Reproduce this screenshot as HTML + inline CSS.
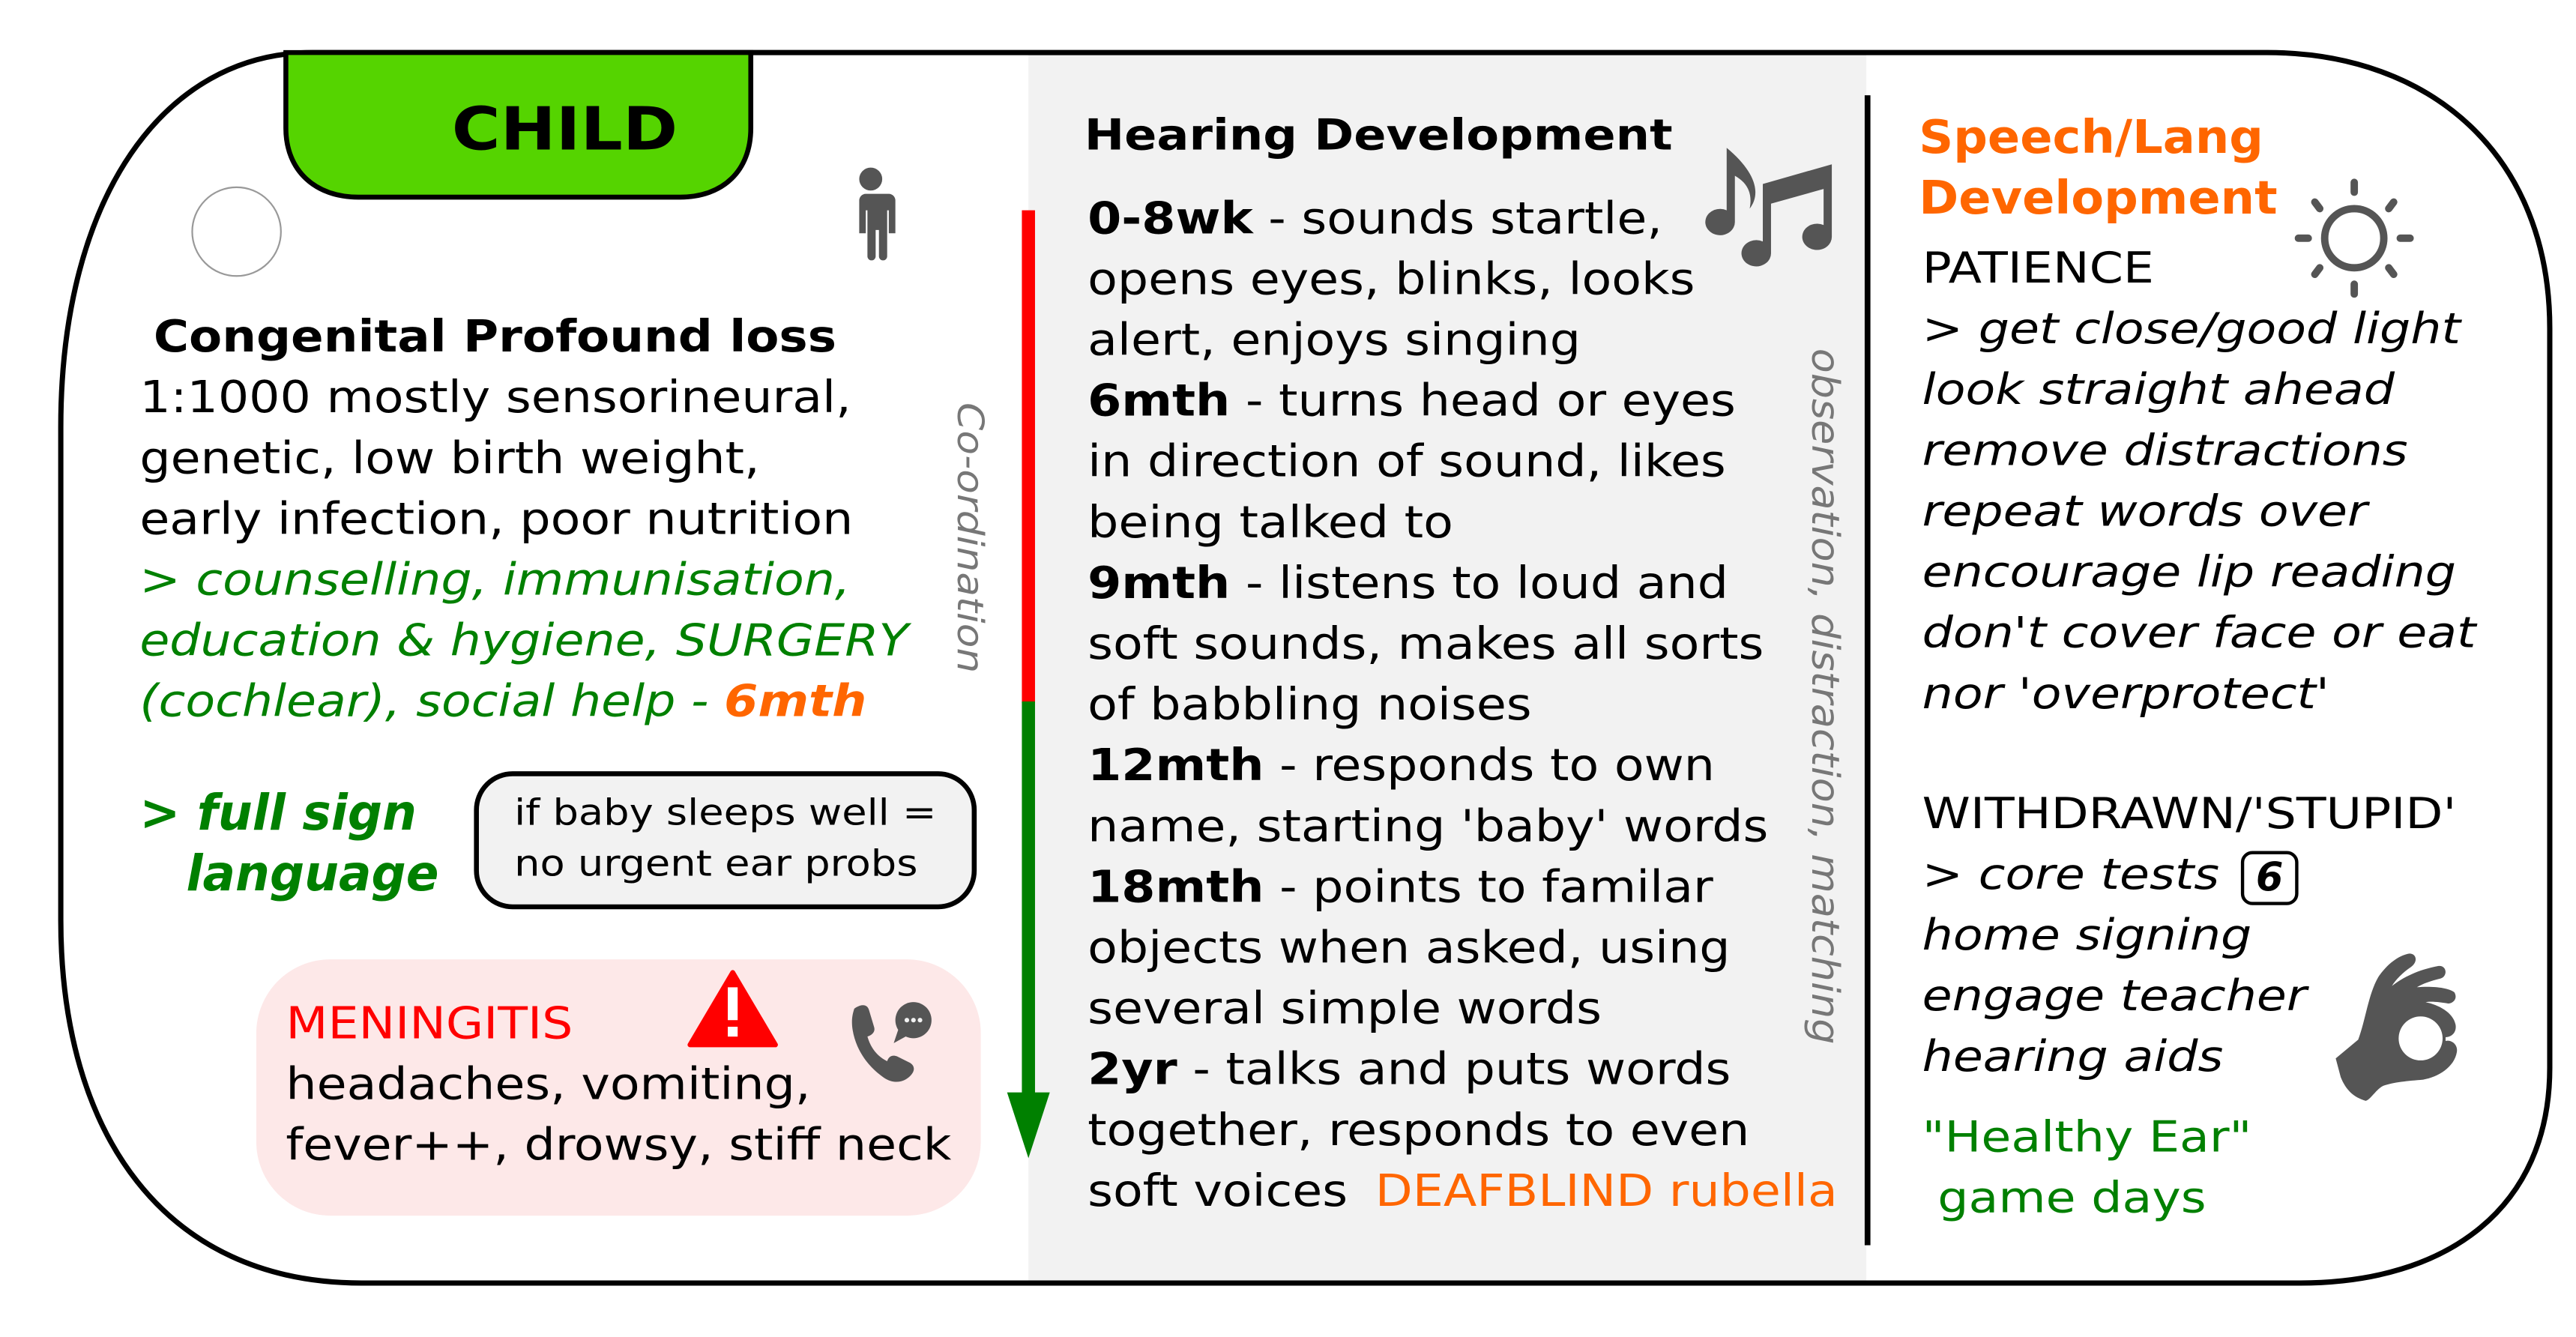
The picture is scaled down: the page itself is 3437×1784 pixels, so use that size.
<!DOCTYPE html>
<html><head><meta charset="utf-8"><style>
html,body{margin:0;padding:0;background:#fff;overflow:hidden}
#s{position:absolute;left:0;top:0;width:1568px;height:814px;transform:scale(2.192);transform-origin:0 0;font-family:"DejaVu Sans","Liberation Sans",sans-serif;color:#000}
.a{position:absolute;white-space:nowrap;transform-origin:0 0}
.c{font-family:"DejaVu Sans Condensed","DejaVu Sans","Liberation Sans",sans-serif}
.t{font-size:27px;line-height:37px}
.g{color:#008000}
.o{color:#ff6600}
b{font-weight:bold}
</style></head><body><div id="s">
<div class="a" style="left:626px;top:31px;width:510px;height:751px;background:#f2f2f2"></div>
<svg class="a" style="left:0;top:0" width="1568" height="814" viewBox="0 0 1568 814">
<path d="M190 32 H1380 C1480 32 1552 95 1552 200 V650 C1552 735 1490 781 1400 781 H220 C100 781 37 690 37 560 V260 C37 120 100 32 190 32 Z" fill="none" stroke="#000" stroke-width="3.2"/>
<path d="M174 32 V78 C174 104 192 120 218 120 H414 C440 120 457 104 457 78 V32 Z" fill="#55d400" stroke="#000" stroke-width="3"/>
<circle cx="144" cy="141" r="27" fill="none" stroke="#999" stroke-width="1"/>
<g fill="#555"><circle cx="530" cy="109" r="7"/><path d="M519 118 h22 a4 4 0 0 1 4 4 v20 h-4 v-14 h-1 v28 a2 2 0 0 1 -5 0 v-16 h-2 v16 a2 2 0 0 1 -5 0 v-28 h-1 v14 h-4 v-20 a4 4 0 0 1 4 -4z"/></g>
<rect x="1135" y="58" width="3.5" height="700" fill="#000"/>
<rect x="622" y="128" width="8" height="300" fill="#ff0000"/>
<rect x="622" y="427" width="8" height="240" fill="#008000"/>
<path d="M613 665 L639 665 L626 705 Z" fill="#008000"/>
<rect x="290" y="471" width="303" height="81" rx="22" fill="#f2f2f2" stroke="#000" stroke-width="3"/>
<rect x="156" y="584" width="441" height="156" rx="45" fill="#fde8e8"/>
<path d="M446 592 L472 636 H420 Z" fill="#ff0000" stroke="#ff0000" stroke-width="3" stroke-linejoin="round"/>
<rect x="443" y="601" width="6" height="20" fill="#fff"/><rect x="443" y="625" width="6" height="6" fill="#fff"/>
<g fill="#555"><path d="M520 614 c4 -3 8 -3 9 1 l3 10 c1 3 -1 5 -4 6 c2 7 6 12 12 15 c1 -3 3 -4 6 -3 l8 4 c3 2 3 5 0 8 c-4 4 -10 5 -16 1 c-10 -7 -17 -17 -19 -29 c-1 -6 0 -10 1 -13z"/><circle cx="556" cy="621" r="11"/><path d="M547 626 l-3 9 9 -5z"/></g>
<g fill="#f2f2f2"><circle cx="552" cy="621" r="1.4"/><circle cx="556" cy="621" r="1.4"/><circle cx="560" cy="621" r="1.4"/></g>
<g fill="#555"><path d="M1051 90 v38 a9 8 0 1 0 5 7 v-28 c7 4 11 10 9 20 c7 -9 4 -22 -14 -37z" /><path d="M1073 112 l42 -12 v44 a9 8 0 1 1 -5 -7 v-22 l-32 9 v30 a9 8 0 1 1 -5 -7z"/></g>
<g stroke="#555" stroke-width="4.5" stroke-linecap="round" fill="none"><circle cx="1433" cy="145" r="18"/><path d="M1433 111 v6 M1433 173 v6 M1399 145 h6 M1461 145 h6 M1409 123 l3 4 M1457 123 l-3 4 M1409 167 l3 -4 M1457 167 l-3 -4"/></g>
</svg>
<svg class="a" style="left:1405px;top:566px" width="114" height="114" viewBox="0 0 750 750">
<path fill="#555" fill-rule="evenodd" d="M110 515 L200 440 C230 360 240 260 280 190 C320 130 370 100 405 95 C435 95 440 130 410 150 C380 170 350 200 335 225 C380 190 440 160 520 145 C555 140 560 185 530 195 C490 205 460 215 435 230 C490 225 560 230 585 250 C600 275 580 295 560 295 C530 290 490 285 470 290 C520 300 580 330 590 380 C595 410 575 430 550 430 L550 445 C575 440 600 460 595 490 C585 550 520 590 460 600 C400 605 340 610 300 625 C270 640 250 680 230 685 C180 670 150 640 130 590 Z M362 435 A88 88 0 1 0 538 435 A88 88 0 1 0 362 435 Z"/>
</svg>
<div class="a" style="left:275px;top:59px;font-size:36px;font-weight:bold;transform:scaleX(1.12)">CHILD</div>
<div class="a t c" style="left:85px;top:187px;transform:scaleX(1.22)">
<div style="padding-left:7px;transform:scaleX(0.99);transform-origin:0 0"><b>Congenital Profound loss</b></div>
1:1000 mostly sensorineural,<br>genetic, low birth weight,<br>early infection, poor nutrition<br>
<i class="g">&gt; counselling, immunisation,<br>education &amp; hygiene, SURGERY<br>(cochlear), social help - <b class="o">6mth</b></i></div>
<div class="a g c" style="left:85px;top:477px;font-size:30px;line-height:37px;font-style:italic;font-weight:bold;transform:scaleX(1.09)">&gt; full sign<br><span style="padding-left:26px">language</span></div>
<div class="a c" style="left:313px;top:480px;font-size:22px;line-height:31px;transform:scaleX(1.25)">if baby sleeps well =<br>no urgent ear probs</div>
<div class="a t c" style="left:174px;top:605px;transform:scaleX(1.22)"><span style="color:#f00">MENINGITIS</span><br>headaches, vomiting,<br>fever++, drowsy, stiff neck</div>
<div class="a" style="left:578px;top:245px;width:0;height:0"><div class="c" style="transform:rotate(90deg) scaleX(1.23);transform-origin:0 0;position:absolute;left:24px;top:0;font-size:22px;color:#777;font-style:italic;white-space:nowrap">Co-ordination</div></div>
<div class="a" style="left:1097px;top:212px;width:0;height:0"><div class="c" style="transform:rotate(90deg) scaleX(1.19);transform-origin:0 0;position:absolute;left:26px;top:0;font-size:23px;color:#777;font-style:italic;white-space:nowrap">observation, distraction, matching</div></div>
<div class="a" style="left:660px;top:68px;font-size:26px;font-weight:bold;transform:scaleX(1.12)">Hearing Development</div>
<div class="a t c" style="left:662px;top:115px;transform:scaleX(1.22)">
<b>0-8wk</b> - sounds startle,<br>opens eyes, blinks, looks<br>alert, enjoys singing<br>
<b>6mth</b> - turns head or eyes<br>in direction of sound, likes<br>being talked to<br>
<b>9mth</b> - listens to loud and<br>soft sounds, makes all sorts<br>of babbling noises<br>
<b>12mth</b> - responds to own<br>name, starting 'baby' words<br>
<b>18mth</b> - points to familar<br>objects when asked, using<br>several simple words<br>
<b>2yr</b> - talks and puts words<br>together, responds to even<br>soft voices <span class="o" style="padding-left:6px">DEAFBLIND rubella</span></div>
<div class="a o" style="left:1168px;top:65px;font-size:28px;line-height:37px;font-weight:bold;transform:scaleX(1.04)">Speech/Lang<br>Development</div>
<div class="a t" style="left:1170px;top:146px;font-size:26px;transform:scaleX(1.14)">PATIENCE<br><i>&gt; get close/good light<br>look straight ahead<br>remove distractions<br>repeat words over<br>encourage lip reading<br>don't cover face or eat<br>nor 'overprotect'</i></div>
<div class="a t" style="left:1170px;top:478px;font-size:26px;transform:scaleX(1.14)">WITHDRAWN/'STUPID'<br><i>&gt; core tests</i><br><i>home signing<br>engage teacher<br>hearing aids</i></div>
<div class="a" style="left:1364px;top:518px;width:31px;height:29px;border:2px solid #000;border-radius:7px;font-size:24px;line-height:29px;text-align:center;font-weight:bold;font-style:italic">6</div>
<div class="a t g" style="left:1170px;top:675px;font-size:26px;transform:scaleX(1.14)">"Healthy Ear"<br>&nbsp;game days</div>
</div></body></html>
